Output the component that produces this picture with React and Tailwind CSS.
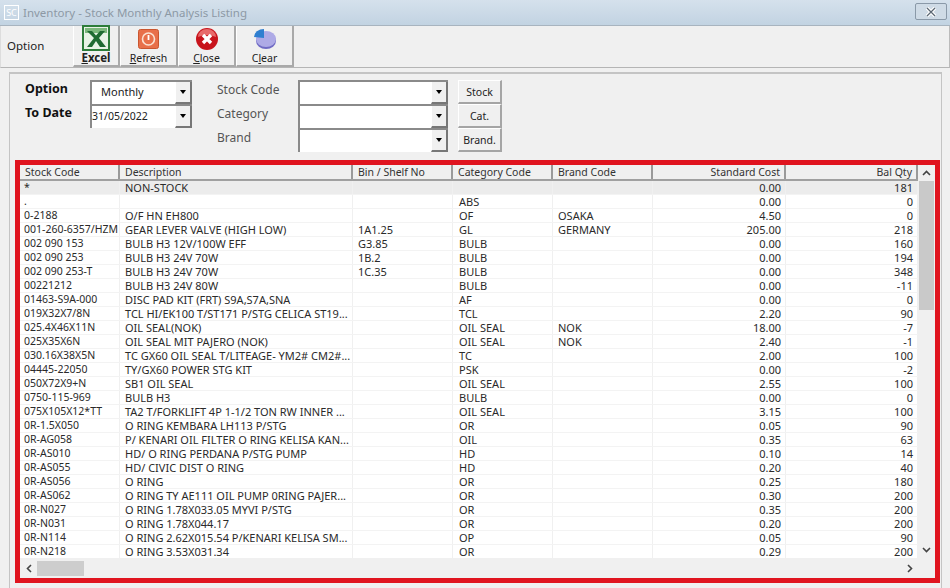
import React from "react";

const rows = [
  ["*", "NON-STOCK", "", "", "", "0.00", "181"],
  [".", "", "", "ABS", "", "0.00", "0"],
  ["0-2188", "O/F HN EH800", "", "OF", "OSAKA", "4.50", "0"],
  ["001-260-6357/HZM", "GEAR LEVER VALVE (HIGH LOW)", "1A1.25", "GL", "GERMANY", "205.00", "218"],
  ["002 090 153", "BULB H3 12V/100W EFF", "G3.85", "BULB", "", "0.00", "160"],
  ["002 090 253", "BULB H3 24V 70W", "1B.2", "BULB", "", "0.00", "194"],
  ["002 090 253-T", "BULB H3 24V 70W", "1C.35", "BULB", "", "0.00", "348"],
  ["00221212", "BULB H3 24V 80W", "", "BULB", "", "0.00", "-11"],
  ["01463-S9A-000", "DISC PAD KIT (FRT) S9A,S7A,SNA", "", "AF", "", "0.00", "0"],
  ["019X32X7/8N", "TCL HI/EK100 T/ST171 P/STG CELICA ST19...", "", "TCL", "", "2.20", "90"],
  ["025.4X46X11N", "OIL SEAL(NOK)", "", "OIL SEAL", "NOK", "18.00", "-7"],
  ["025X35X6N", "OIL SEAL MIT PAJERO (NOK)", "", "OIL SEAL", "NOK", "2.40", "-1"],
  ["030.16X38X5N", "TC GX60 OIL SEAL T/LITEAGE- YM2# CM2#...", "", "TC", "", "2.00", "100"],
  ["04445-22050", "TY/GX60 POWER STG KIT", "", "PSK", "", "0.00", "-2"],
  ["050X72X9+N", "SB1 OIL SEAL", "", "OIL SEAL", "", "2.55", "100"],
  ["0750-115-969", "BULB H3", "", "BULB", "", "0.00", "0"],
  ["075X105X12*TT", "TA2 T/FORKLIFT 4P 1-1/2 TON RW INNER ...", "", "OIL SEAL", "", "3.15", "100"],
  ["0R-1.5X050", "O RING KEMBARA LH113 P/STG", "", "OR", "", "0.05", "90"],
  ["0R-AG058", "P/ KENARI OIL FILTER O RING KELISA KAN...", "", "OIL", "", "0.35", "63"],
  ["0R-AS010", "HD/ O RING PERDANA P/STG PUMP", "", "HD", "", "0.10", "14"],
  ["0R-AS055", "HD/ CIVIC DIST O RING", "", "HD", "", "0.20", "40"],
  ["0R-AS056", "O RING", "", "OR", "", "0.25", "180"],
  ["0R-AS062", "O RING TY AE111 OIL PUMP 0RING PAJER...", "", "OR", "", "0.30", "200"],
  ["0R-N027", "O RING 1.78X033.05 MYVI P/STG", "", "OR", "", "0.35", "200"],
  ["0R-N031", "O RING 1.78X044.17", "", "OR", "", "0.20", "200"],
  ["0R-N114", "O RING 2.62X015.54 P/KENARI KELISA SM...", "", "OP", "", "0.05", "90"],
  ["0R-N218", "O RING 3.53X031.34", "", "OR", "", "0.29", "200"],
];

const cols = [
  { name: "Stock Code", w: "w-[100px]", cls: "pl-[5px]", cell: "pl-[4px] text-[10.5px]" },
  { name: "Description", w: "w-[233px]", cls: "pl-[5px]", cell: "pl-[5px] text-[11px]" },
  { name: "Bin / Shelf No", w: "w-[100px]", cls: "pl-[5px]", cell: "pl-[5px] text-[11px]" },
  { name: "Category Code", w: "w-[100px]", cls: "pl-[5px]", cell: "pl-[6px] text-[11px]" },
  { name: "Brand Code", w: "w-[100px]", cls: "pl-[5px]", cell: "pl-[5px] text-[11px]" },
  { name: "Standard Cost", w: "w-[133px]", cls: "pr-[4px] text-right", cell: "pr-[4px] text-right text-[11px]" },
  { name: "Bal Qty", w: "w-[132px]", cls: "pr-[4px] text-right", cell: "pr-[4px] text-right text-[11px]" },
];

function Arrow() {
  return <div className="w-0 h-0 border-l-[3.5px] border-r-[3.5px] border-t-[4px] border-l-transparent border-r-transparent border-t-black" />;
}

function Combo({ w, text, textCls = "" }) {
  return (
    <div className={`${w} h-[24px] flex bg-white border-l-2 border-t-2 border-[#8a8a8a]`}>
      <div className={`flex-1 flex items-center text-[#222] ${textCls}`}>{text}</div>
      <div className="w-[17px] flex items-center justify-center bg-[#f0f0f0] border-r-2 border-b-2 border-[#777] border-l border-l-white">
        <Arrow />
      </div>
    </div>
  );
}

function Btn({ children, before = "", u, rest, pressed, wide = true }) {
  return (
    <div className={`h-[41px] flex flex-col items-center justify-end border-r-2 border-b-2 border-[#a9a9a9] border-l border-l-white ${wide ? "w-[58px]" : "w-[47px]"}`}>
      <div className="h-[26px] flex items-center justify-center">{children}</div>
      <div className={`leading-[14px] text-[#222] ${pressed ? "text-[11.5px] font-bold" : "text-[10.5px]"}`}>
        {before}<span className="underline">{u}</span>{rest}
      </div>
    </div>
  );
}

function SideBtn({ children }) {
  return (
    <div className="w-[44px] h-[24px] pt-[2px] flex items-center justify-center text-[10.5px] text-[#222] bg-[#f0f0f0] border-r-2 border-b-2 border-[#a5a5a5] border-l border-t border-l-white border-t-white">
      {children}
    </div>
  );
}

export default function App() {
  return (
    <div className="w-[950px] h-[588px] overflow-hidden flex flex-col bg-[#f0f0f0] font-['Noto_Sans','Liberation_Sans',sans-serif]">
      {/* Title bar */}
      <div className="h-[26px] shrink-0 flex items-center justify-between pl-[4px] pr-[3px] bg-gradient-to-b from-[#d5e1ec] to-[#c2d3e2] border-b border-[#a8b4bf]">
        <div className="flex items-center gap-[4px]">
          <div className="w-[15px] h-[15px] border border-white text-white text-[9px] leading-[13px] text-center">SC</div>
          <span className="text-[11.5px] text-[#8d99a5]">Inventory - Stock Monthly Analysis Listing</span>
        </div>
        <div className="w-[32px] h-[17px] mb-[2px] flex items-center justify-center border border-[#8a99a8] rounded-[2px] bg-[#cfdbe6]">
          <svg width="12" height="10" viewBox="0 0 12 10"><path d="M2 1 L10 9 M10 1 L2 9" stroke="#fff" strokeWidth="3.5" /><path d="M2 1 L10 9 M10 1 L2 9" stroke="#5a6672" strokeWidth="1.2" /></svg>
        </div>
      </div>

      {/* Toolbar */}
      <div className="h-[42px] shrink-0 flex items-start border-b border-[#b5b5b5] border-r border-r-[#bbb] border-l border-l-[#ddd]">
        <div className="w-[72px] pl-[6px] pt-[11px] text-[11.5px] text-[#222]">Option</div>
        <Btn u="E" rest="xcel" pressed wide={false}>
          <svg width="28" height="26" viewBox="0 0 28 26">
            <rect x="1" y="1" width="26" height="24" fill="#e8f3e6" stroke="#2d7d3a" strokeWidth="2" />
            <path d="M3 3 H25 V8 H3Z" fill="#7cb87c" />
            <path d="M5 6 L12 13 L5 22 H10 L14 16 L18 22 H24 L17 13 L23 6 H18 L14 10.5 L10 6Z" fill="#1f6b32" />
          </svg>
        </Btn>
        <Btn u="R" rest="efresh">
          <svg width="21" height="20" viewBox="0 0 21 20">
            <rect x="0.5" y="0.5" width="20" height="19" rx="2" fill="#e8704a" stroke="#c9562f" />
            <circle cx="10.5" cy="10" r="6" fill="none" stroke="#fbe3d4" strokeWidth="1.6" />
            <path d="M10.5 6 V11" stroke="#fff" strokeWidth="1.8" />
          </svg>
        </Btn>
        <Btn u="C" rest="lose">
          <svg width="24" height="24" viewBox="0 0 24 24">
            <circle cx="12" cy="12" r="11" fill="#c8141c" />
            <path d="M3 10 A9 8 0 0 1 21 10 Q12 6 3 10Z" fill="#e86a6a" />
            <path d="M8 8 L16 16 M16 8 L8 16" stroke="#fff" strokeWidth="3.4" />
          </svg>
        </Btn>
        <Btn before="C" u="l" rest="ear">
          <svg width="24" height="22" viewBox="0 0 24 22">
            <ellipse cx="13" cy="13" rx="10" ry="8" fill="#6f6ac4" />
            <ellipse cx="13" cy="11" rx="10" ry="8" fill="#aeaae6" />
            <path d="M13 11 L13 2 A10 8 0 0 0 3 10 Z" fill="#2f7fd0" transform="translate(-2 -1)" />
          </svg>
        </Btn>
      </div>
      <div className="h-[4px] shrink-0" />

      {/* Main panel */}
      <div className="ml-[9px] mr-[8px] flex-1 flex flex-col border-l border-t-2 border-r border-[#c4c4c4] pl-[5px] pr-[1px] pb-[5px] min-h-0">
        {/* Filter form */}
        <div className="h-[86px] shrink-0 pt-[6px] flex">
          <div className="w-[75px] pl-[10px] flex flex-col text-[12.5px] font-bold text-[#111]">
            <div className="h-[24px] leading-[18px]">Option</div>
            <div className="h-[24px] leading-[18px]">To Date</div>
          </div>
          <div className="w-[102px] flex flex-col">
            <Combo w="w-[102px]" text="Monthly" textCls="pl-[9px] pb-[2px] text-[11px]" />
            <Combo w="w-[102px]" text="31/05/2022" textCls="pl-[0px] text-[10.5px]" />
          </div>
          <div className="w-[106px] pl-[25px] flex flex-col text-[12px] text-[#555]">
            <div className="h-[24px] leading-[19px] whitespace-nowrap">Stock Code</div>
            <div className="h-[24px] leading-[19px]">Category</div>
            <div className="h-[24px] leading-[19px]">Brand</div>
          </div>
          <div className="w-[150px] flex flex-col">
            <Combo w="w-[150px]" text="" />
            <Combo w="w-[150px]" text="" />
            <Combo w="w-[150px]" text="" />
          </div>
          <div className="ml-[10px] flex flex-col">
            <SideBtn>Stock</SideBtn>
            <SideBtn>Cat.</SideBtn>
            <SideBtn>Brand.</SideBtn>
          </div>
        </div>

        {/* Highlighted grid */}
        <div className="w-[925px] h-[423px] shrink-0 border-[5px] border-[#e0141f] flex flex-col bg-[#f0f0f0]">
          <div className="flex-1 flex min-h-0">
            <div className="w-[898px] flex flex-col">
              <div className="h-[16px] shrink-0 flex bg-[#f0f0f0] border-b-2 border-[#a0a0a0]">
                {cols.map((c) => (
                  <div key={c.name} className={`${c.w} ${c.cls} shrink-0 text-[10.5px] leading-[14px] text-[#333] border-r-2 border-[#9a9a9a] whitespace-nowrap overflow-hidden`}>
                    {c.name}
                  </div>
                ))}
              </div>
              <div className="flex-1 overflow-hidden bg-white">
                {rows.map((r, i) => (
                  <div key={i} className={`h-[14px] flex ${i === 0 ? "bg-[#ececec]" : "bg-white"} border-b border-[#f3f3f3]`}>
                    {cols.map((c, j) => (
                      <div key={j} className={`${c.w} ${c.cell} shrink-0 leading-[13px] text-[#2a2a2a] border-r border-[#f0f0f0] whitespace-nowrap overflow-hidden`}>
                        {r[j]}
                      </div>
                    ))}
                  </div>
                ))}
              </div>
            </div>
            <div className="w-[17px] flex flex-col bg-[#f0f0f0]">
              <div className="h-[16px] flex items-center justify-center">
                <svg width="9" height="6" viewBox="0 0 9 6"><path d="M1 5 L4.5 1.5 L8 5" fill="none" stroke="#444" strokeWidth="1.6" /></svg>
              </div>
              <div className="h-[129px] mx-[1px] bg-[#c9c9c9]" />
              <div className="flex-1" />
              <div className="h-[16px] flex items-center justify-center">
                <svg width="9" height="6" viewBox="0 0 9 6"><path d="M1 1 L4.5 4.5 L8 1" fill="none" stroke="#444" strokeWidth="1.6" /></svg>
              </div>
            </div>
          </div>
          <div className="h-[20px] shrink-0 flex items-center bg-[#f0f0f0]">
            <div className="w-[17px] flex justify-center">
              <svg width="6" height="9" viewBox="0 0 6 9"><path d="M5 1 L1.5 4.5 L5 8" fill="none" stroke="#444" strokeWidth="1.6" /></svg>
            </div>
            <div className="w-[47px] h-[15px] bg-[#cdcdcd]" />
            <div className="flex-1" />
            <div className="w-[17px] flex justify-center mr-[17px]">
              <svg width="6" height="9" viewBox="0 0 6 9"><path d="M1 1 L4.5 4.5 L1 8" fill="none" stroke="#444" strokeWidth="1.6" /></svg>
            </div>
          </div>
        </div>
      </div>
    </div>
  );
}
